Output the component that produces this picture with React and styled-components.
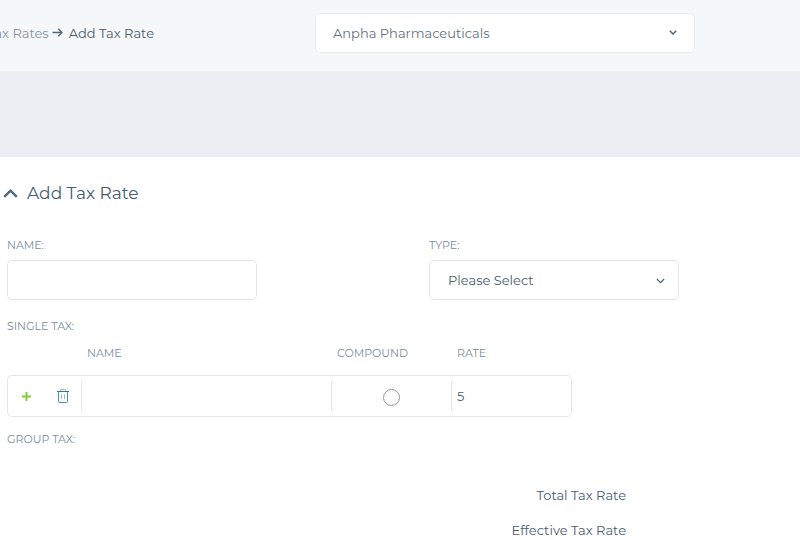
import React, { useState } from 'react'
import styled, { createGlobalStyle } from 'styled-components'

const GlobalStyle = createGlobalStyle`
  * {
    box-sizing: border-box;
  }
  body {
    margin: 0;
    background: #ffffff;
    color: #475c70;
    font-family: Montserrat, Inter, sans-serif;
    font-size: 13px;
    line-height: 20px;
    overflow: hidden;
  }
  input, select, button {
    font: inherit;
    color: inherit;
  }
`

const TopBar = styled.header`
  display: flex;
  align-items: center;
  justify-content: space-between;
  padding: 13px 105px 18px 0;
  background: #f5f7f9;
`

const Breadcrumb = styled.nav`
  display: flex;
  flex: 0 0 154px;
  align-items: center;
  justify-content: flex-end;
  overflow: hidden;
  white-space: nowrap;
  a {
    color: #8595a4;
    text-decoration: none;
  }
  svg {
    flex: none;
    margin: 0 6px 0 3px;
  }
`

const Band = styled.div`
  height: 86px;
  background: #ebeef3;
`

const Main = styled.main`
  padding: 26px 9px 0 7px;
`

const SectionToggle = styled.button`
  display: flex;
  align-items: center;
  gap: 9px;
  margin: 0 0 32px -4px;
  padding: 0;
  border: 0;
  background: none;
  font-size: 17px;
  line-height: 20px;
`

const Fields = styled.div`
  display: grid;
  grid-template-columns: 1fr 1fr;
  column-gap: 60px;
  margin-bottom: 16px;
`

const Label = styled.label`
  display: block;
  margin-bottom: 5px;
  color: #7b8d9e;
  font-size: 11px;
  line-height: 20px;
`

const Caption = styled(Label).attrs({ as: 'h3' })`
  margin: 0;
  font-weight: 400;
`

const TextInput = styled.input`
  display: block;
  width: 250px;
  height: 40px;
  padding: 0 18px;
  border: 1px solid #dfe4ed;
  border-radius: 5px;
  background: #ffffff;
`

const SelectWrap = styled.div`
  position: relative;
  width: ${props => props.$width};
  svg {
    position: absolute;
    top: ${props => props.$iconTop};
    right: ${props => props.$iconRight};
    pointer-events: none;
  }
`

const Select = styled.select`
  display: block;
  appearance: none;
  width: 100%;
  height: 40px;
  padding: 0 40px 0 ${props => (props.$light ? '17px' : '18px')};
  border: 1px solid ${props => (props.$light ? '#e8ecf1' : '#dfe4ed')};
  border-radius: 5px;
  background: #ffffff;
  color: ${props => (props.$light ? '#5f7182' : '#475c70')};
`

const RateTable = styled.table`
  width: 565px;
  margin-bottom: 12px;
  border-collapse: separate;
  border-spacing: 0;
  table-layout: fixed;
  th {
    padding: 7px 0 12px 5px;
    color: #7b8d9e;
    font-size: 11px;
    font-weight: 400;
    line-height: 20px;
    text-align: left;
  }
  td {
    height: 42px;
    padding: 0;
    border: 1px solid #e4e6e8;
    border-width: 1px 0;
  }
  td:first-child {
    border-left-width: 1px;
    border-radius: 5px 0 0 5px;
  }
  td:last-child {
    border-right-width: 1px;
    border-radius: 0 5px 5px 0;
  }
`

const Cell = styled.div`
  display: flex;
  align-items: center;
  justify-content: ${props => props.$justify || 'flex-start'};
  height: 30px;
  border-right: ${props => (props.$last ? '0' : '1px solid #e4e6e8')};
`

const CellInput = styled.input`
  width: 100%;
  height: 30px;
  padding: 0 5px;
  border: 0;
  background: none;
`

const Radio = styled.input`
  appearance: none;
  width: 17px;
  height: 17px;
  margin: 3px 0 0;
  border: 1px solid #979797;
  border-radius: 50%;
  &:checked {
    background: #8dc63f;
  }
`

const IconButton = styled.button`
  display: flex;
  flex: 1;
  align-items: center;
  justify-content: center;
  height: 30px;
  padding: 0;
  border: 0;
  background: none;
`

const Totals = styled.dl`
  width: 619px;
  margin: 36px 0 0;
  text-align: right;
  dt {
    margin-bottom: 15px;
  }
`

const Arrow = () => (
  <svg width="11" height="10" viewBox="0 0 11 10" fill="none" stroke="#52677a" strokeWidth="1.3">
    <path d="M0.5 4.5H10M6.2 0.8L10 4.5L6.2 8.2" />
  </svg>
)

const ChevronDown = ({ width, height, stroke = 1.3 }) => (
  <svg width={width} height={height} viewBox="0 0 10 6" fill="none" stroke="#52677a" strokeWidth={stroke}>
    <path d="M1 0.8L5 4.9L9 0.8" />
  </svg>
)

const ChevronUp = () => (
  <svg width="15" height="10" viewBox="0 0 15 10" fill="none" stroke="#52677a" strokeWidth="2.3">
    <path d="M1.2 8.8L7.5 2.7L13.8 8.8" />
  </svg>
)

const Plus = () => (
  <svg width="9" height="9" viewBox="0 0 9 9" stroke="#84cc3c" strokeWidth="2">
    <path d="M4.5 0V9M0 4.5H9" />
  </svg>
)

const Trash = () => (
  <svg width="12" height="14" viewBox="0 0 12 14" fill="none" stroke="#4b90ac">
    <path d="M0 2.5H12" stroke="#2c7898" />
    <path d="M3.5 2.5V1.3Q3.5 0.5 4.3 0.5H7.7Q8.5 0.5 8.5 1.3V2.5" opacity="0.65" />
    <path d="M1.5 3V12.2Q1.5 13.5 2.8 13.5H9.2Q10.5 13.5 10.5 12.2V3" />
    <path d="M4.5 5.5V10M7.5 5.5V10" opacity="0.6" />
  </svg>
)

const TaxForm = () => {
  const [name, setName] = useState('')
  const [type, setType] = useState('')
  const [row, setRow] = useState({ name: '', compound: false, rate: '5' })

  return (
    <div>
      <Fields>
        <div>
          <Label htmlFor="name">NAME:</Label>
          <TextInput id="name" value={name} onChange={e => setName(e.target.value)} />
        </div>
        <div>
          <Label htmlFor="type">TYPE:</Label>
          <SelectWrap $width="250px" $iconTop="18px" $iconRight="14px">
            <Select id="type" value={type} onChange={e => setType(e.target.value)}>
              <option value="">Please Select</option>
            </Select>
            <ChevronDown width="9" height="6" />
          </SelectWrap>
        </div>
      </Fields>

      <Caption>SINGLE TAX:</Caption>
      <RateTable>
        <colgroup>
          <col style={{ width: 75 }} />
          <col style={{ width: 250 }} />
          <col style={{ width: 120 }} />
          <col />
        </colgroup>
        <thead>
          <tr>
            <th />
            <th scope="col">NAME</th>
            <th scope="col">COMPOUND</th>
            <th scope="col">RATE</th>
          </tr>
        </thead>
        <tbody>
          <tr>
            <td>
              <Cell>
                <IconButton type="button" aria-label="Add row"><Plus /></IconButton>
                <IconButton type="button" aria-label="Delete row"><Trash /></IconButton>
              </Cell>
            </td>
            <td>
              <Cell>
                <CellInput aria-label="Name" value={row.name} onChange={e => setRow({ ...row, name: e.target.value })} />
              </Cell>
            </td>
            <td>
              <Cell $justify="center">
                <Radio type="radio" aria-label="Compound" checked={row.compound} onChange={() => setRow({ ...row, compound: true })} />
              </Cell>
            </td>
            <td>
              <Cell $last>
                <CellInput aria-label="Rate" value={row.rate} onChange={e => setRow({ ...row, rate: e.target.value })} />
              </Cell>
            </td>
          </tr>
        </tbody>
      </RateTable>

      <Caption>GROUP TAX:</Caption>
      <Totals>
        <dt>Total Tax Rate</dt>
        <dt>Effective Tax Rate</dt>
      </Totals>
    </div>
  )
}

const App = () => {
  const [open, setOpen] = useState(true)

  return (
    <>
      <GlobalStyle />
      <TopBar>
        <Breadcrumb>
          <a href="#rates">Tax Rates</a>
          <Arrow />
          <span>Add Tax Rate</span>
        </Breadcrumb>
        <SelectWrap $width="380px" $iconTop="17px" $iconRight="18px">
          <Select $light aria-label="Company" defaultValue="anpha">
            <option value="anpha">Anpha Pharmaceuticals</option>
          </Select>
          <ChevronDown width="8" height="5" stroke={1.9} />
        </SelectWrap>
      </TopBar>
      <Band />
      <Main>
        <SectionToggle type="button" aria-expanded={open} onClick={() => setOpen(!open)}>
          <ChevronUp />
          Add Tax Rate
        </SectionToggle>
        {open && <TaxForm />}
      </Main>
    </>
  )
}

export default App
